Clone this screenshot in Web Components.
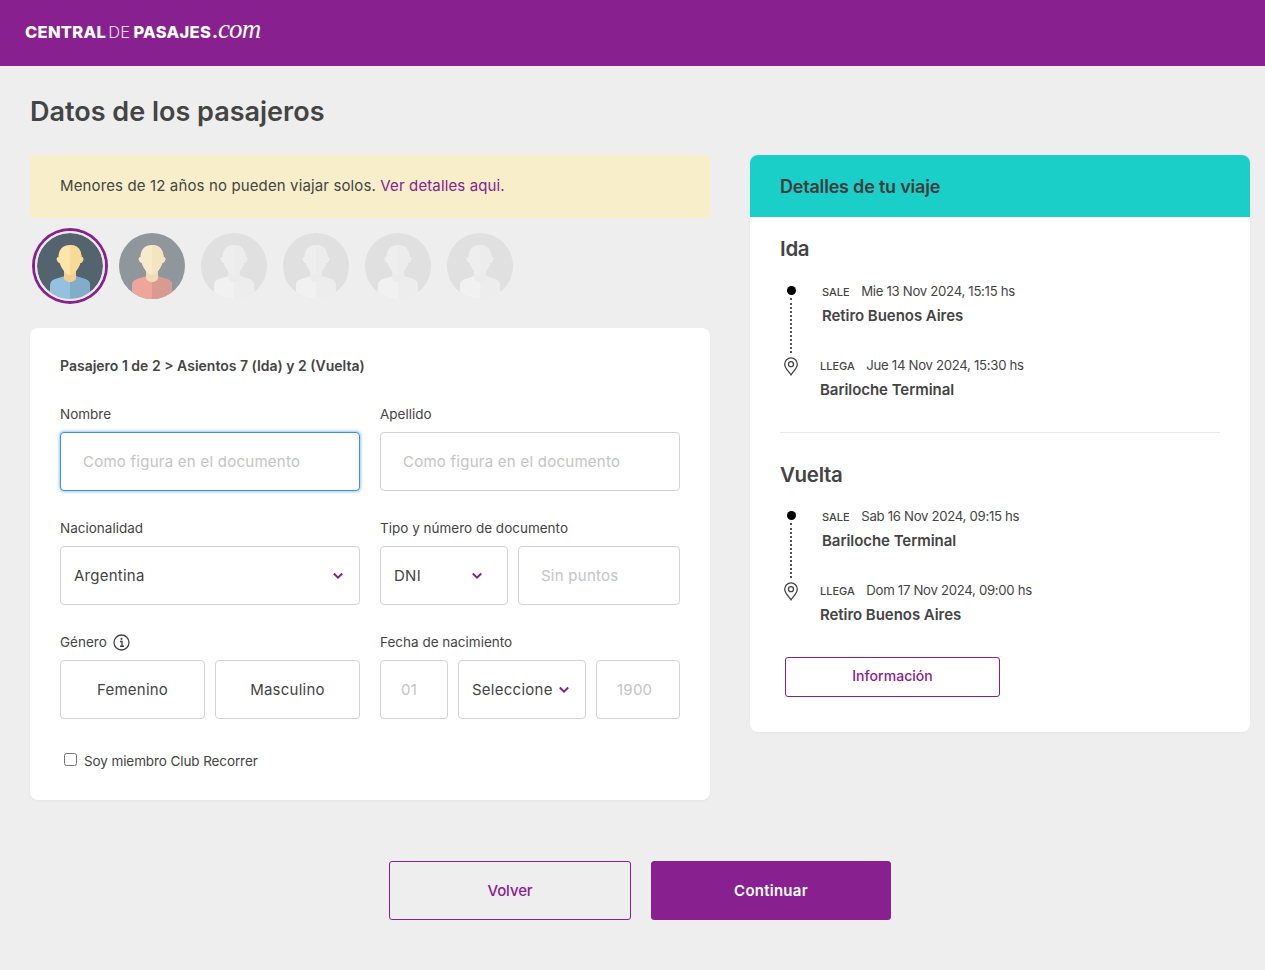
<!DOCTYPE html>
<html lang="es">
<head>
<meta charset="utf-8">
<title>Datos de los pasajeros</title>
<style>
  body { margin: 0; background: #eeeeee; color: #444; font-family: Inter, "Noto Sans", sans-serif; }
</style>
</head>
<body>
<cp-header></cp-header>
<cp-page>
  <span slot="title">Datos de los pasajeros</span>
  <cp-alert slot="left">Menores de 12 años no pueden viajar solos. <a>Ver detalles aqui.</a></cp-alert>
  <cp-avatars slot="left"></cp-avatars>
  <cp-form slot="left"></cp-form>
  <cp-trip slot="right"></cp-trip>
  <cp-actions slot="footer"></cp-actions>
</cp-page>

<script>
const PURPLE = '#88218f';

class CpHeader extends HTMLElement {
    constructor() {
        super();
        this.attachShadow({ mode: 'open' });
        this.shadowRoot.innerHTML = `
        <style>
            :host { display: flex; align-items: center; height: 66px; background: ${PURPLE}; padding: 0 0 7px 25px; box-sizing: border-box; }
            .logo { color: #fff; font: 800 16.500px/1 Inter, sans-serif; letter-spacing: .3px; white-space: nowrap; display: flex; align-items: baseline; }
            .de { font-weight: 300; color: #eedcf0; margin: 0 3px 0 2px; }
            .com { font: italic 400 27px/1 "Liberation Serif", serif; letter-spacing: -.9px; margin-left: 1px; }
        </style>
        <div class="logo">CENTRAL<span class="de">DE</span>PASAJES<span class="com">.com</span></div>`;
    }
}

class CpPage extends HTMLElement {
    constructor() {
        super();
        this.attachShadow({ mode: 'open' });
        this.shadowRoot.innerHTML = `
        <style>
            :host { display: block; padding: 0 15px 50px 30px; }
            h1 { margin: 0; padding-top: 28px; height: 89px; box-sizing: border-box; font: 600 27px/36px Inter, sans-serif; letter-spacing: 0; color: #444; }
            .cols { display: flex; gap: 40px; align-items: flex-start; }
            .left { width: 680px; flex: none; }
            .right { width: 500px; flex: none; }
            .footer { margin-top: 61px; }
        </style>
        <h1><slot name="title"></slot></h1>
        <div class="cols">
            <div class="left"><slot name="left"></slot></div>
            <div class="right"><slot name="right"></slot></div>
        </div>
        <div class="footer"><slot name="footer"></slot></div>`;
    }
}

class CpAlert extends HTMLElement {
    constructor() {
        super();
        this.attachShadow({ mode: 'open' });
        this.shadowRoot.innerHTML = `
        <style>
            :host { display: block; height: 63px; box-sizing: border-box; padding: 0 30px; line-height: 61px; background: #f8efca; border-radius: 4px; font-size: 15px; letter-spacing: .13px; color: #444; }
            ::slotted(a) { color: ${PURPLE}; }
        </style>
        <slot></slot>`;
    }
}

class CpAvatar extends HTMLElement {
    constructor() {
        super();
        this.attachShadow({ mode: 'open' });
    }
    connectedCallback() {
        const kind = this.getAttribute('kind') || 'off';
        // bg, skin, skin shade, neck, shirt, shirt shade
        const colors = {
            man: ['#54646e', '#fde4a9', '#f9d996', '#f2cf8e', '#94c1de', '#82adc8'],
            woman: ['#8f979d', '#f8ebcd', '#f4e4c0', '#eedcb2', '#eea59c', '#d99a91'],
            off: ['#e0e0e0', '#eeeeee', '#ececec', '#ebebeb', '#f1f1f1', '#ededed']
        }[kind];
        const ring = this.hasAttribute('selected') ? '<div class="ring"></div>' : '';
        this.shadowRoot.innerHTML = `
        <style>
            :host { display: block; position: relative; width: 66px; height: 66px; }
            svg { display: block; }
            .ring { position: absolute; inset: -2px; border-radius: 50%; box-shadow: 0 0 0 3px ${PURPLE}; background: none; border: 2px solid #e9e9e9; box-sizing: border-box; }
        </style>
        <svg width="66" height="66" viewBox="0 0 66 66">
            <defs><clipPath id="c"><circle cx="33" cy="33" r="33"/></clipPath></defs>
            <g clip-path="url(#c)">
                <rect width="66" height="66" fill="${colors[0]}"/>
                <path d="M13 66V52c0-3 2-5 5-6l10-3h10l10 3c3 1 5 3 5 6v14z" fill="${colors[4]}"/>
                <path d="M33 43h5l10 3c3 1 5 3 5 6v14H33z" fill="${colors[5]}"/>
                <path d="M27 36h12v9c0 2-3 4-6 4s-6-2-6-4z" fill="${colors[3]}"/>
                <path d="M33 12c-7.500 0-11.500 5-11.500 12-1.500 0-2.200 1.500-1.700 3 .4 1.500 1.600 3 2.900 3 1 4.500 6.500 12 10.300 12s9.300-7.500 10.300-12c1.300 0 2.500-1.500 2.900-3 .5-1.500-.2-3-1.700-3 0-7-4-12-11.500-12z" fill="${colors[1]}"/>
                <path d="M33 12c7.500 0 11.500 5 11.500 12 1.500 0 2.200 1.500 1.700 3-.4 1.500-1.600 3-2.900 3-1 4.500-6.500 12-10.300 12z" fill="${colors[2]}"/>
            </g>
        </svg>${ring}`;
    }
}

class CpAvatars extends HTMLElement {
    constructor() {
        super();
        this.attachShadow({ mode: 'open' });
        this.shadowRoot.innerHTML = `
        <style>
            :host { display: flex; gap: 16px; padding: 15px 0 29px 7px; }
        </style>
        <cp-avatar kind="man" selected></cp-avatar>
        <cp-avatar kind="woman"></cp-avatar>
        <cp-avatar></cp-avatar>
        <cp-avatar></cp-avatar>
        <cp-avatar></cp-avatar>
        <cp-avatar></cp-avatar>`;
    }
}

// campo de formulario: input, select o boton, todos con la misma caja
class CpField extends HTMLElement {
    constructor() {
        super();
        this.attachShadow({ mode: 'open' });
    }
    connectedCallback() {
        const chevron = this.hasAttribute('select')
            ? `<svg width="12" height="8" viewBox="0 0 12 8"><path d="M1.800 1.500 6 5.700l4.200-4.200" fill="none" stroke="${PURPLE}" stroke-width="2"/></svg>`
            : '';
        this.shadowRoot.innerHTML = `
        <style>
            :host { display: flex; align-items: center; justify-content: space-between; box-sizing: border-box; height: 59px; background: #fff; border: 1px solid #d3d3d3; border-radius: 4px; padding: 0 15px 0 13px; font-size: 15px; letter-spacing: .25px; color: #444; white-space: nowrap; }
            :host([placeholder]) { color: #c4c4c4; padding-left: 22px; }
            :host([focus]) { border-color: #3e8df0; box-shadow: 0 0 3px 1px #9cc6f7; }
            :host([center]) { justify-content: center; padding: 0; }
            svg { flex: none; }
        </style>
        <slot></slot>${chevron}`;
    }
}

class CpForm extends HTMLElement {
    constructor() {
        super();
        this.attachShadow({ mode: 'open' });
        this.shadowRoot.innerHTML = `
        <style>
            :host { display: block; box-sizing: border-box; height: 472px; background: #fff; border-radius: 8px; padding: 28px 30px 0; box-shadow: 0 1px 3px rgba(0,0,0,.04); }
            .title { height: 20px; font-weight: 600; font-size: 14px; line-height: 20px; letter-spacing: 0; color: #444; }
            .grid { display: grid; grid-template-columns: 300px 300px; gap: 28px 20px; margin-top: 29px; }
            label { display: flex; align-items: center; gap: 6px; height: 18px; margin-bottom: 9px; font-size: 13.500px; letter-spacing: 0; color: #444; }
            .split { display: flex; gap: 10px; }
            .grow { flex: 1; }
            .w128 { width: 128px; flex: none; }
            .w162 { width: 162px; flex: none; }
            .w68 { width: 68px; flex: none; }
            .w84 { width: 84px; flex: none; }
            .w68, .w84 { padding-left: 20px; }
            .club { display: flex; align-items: center; gap: 7px; margin-top: 32px; padding-left: 4px; height: 20px; font-size: 13.500px; letter-spacing: -.1px; color: #444; }
            .box { width: 11px; height: 11px; background: #fff; border: 1px solid #767676; border-radius: 2.500px; margin-top: -3px; }
        </style>
        <div class="title">Pasajero 1 de 2 &gt; Asientos 7 (Ida) y 2 (Vuelta)</div>
        <div class="grid">
            <div>
                <label>Nombre</label>
                <cp-field placeholder focus>Como figura en el documento</cp-field>
            </div>
            <div>
                <label>Apellido</label>
                <cp-field placeholder>Como figura en el documento</cp-field>
            </div>
            <div>
                <label>Nacionalidad</label>
                <cp-field select>Argentina</cp-field>
            </div>
            <div>
                <label>Tipo y número de documento</label>
                <div class="split">
                    <cp-field select class="w128" style="padding-right:24px">DNI</cp-field>
                    <cp-field placeholder class="w162">Sin puntos</cp-field>
                </div>
            </div>
            <div>
                <label>Género
                    <svg width="17" height="17" viewBox="0 0 17 17"><circle cx="8.500" cy="8.500" r="7.500" fill="none" stroke="#444" stroke-width="1.300"/><path d="M7 7.500h2v4.500M7 12.300h4" fill="none" stroke="#444" stroke-width="1.400"/><circle cx="8.500" cy="4.800" r="1.100" fill="#444"/></svg>
                </label>
                <div class="split">
                    <cp-field center class="grow">Femenino</cp-field>
                    <cp-field center class="grow">Masculino</cp-field>
                </div>
            </div>
            <div>
                <label>Fecha de nacimiento</label>
                <div class="split">
                    <cp-field placeholder class="w68">01</cp-field>
                    <cp-field select class="w128">Seleccione</cp-field>
                    <cp-field placeholder class="w84">1900</cp-field>
                </div>
            </div>
        </div>
        <div class="club"><span class="box"></span>Soy miembro Club Recorrer</div>`;
    }
}

class CpStop extends HTMLElement {
    constructor() {
        super();
        this.attachShadow({ mode: 'open' });
    }
    connectedCallback() {
        const arrive = this.hasAttribute('arrive');
        const mark = arrive
            ? `<svg class="pin" width="16" height="19" viewBox="0 0 16 19"><path d="M8 17.800C5 13.800 1.700 10.800 1.700 7.200a6.300 6.300 0 0 1 12.600 0c0 3.600-3.300 6.600-6.300 10.600z" fill="none" stroke="#444" stroke-width="1.300"/><circle cx="8" cy="7.200" r="2.500" fill="none" stroke="#444" stroke-width="1.300"/></svg>`
            : `<span class="dot"></span><span class="line"></span>`;
        this.shadowRoot.innerHTML = `
        <style>
            :host { display: grid; grid-template-columns: 42px auto; height: 74px; }
            :host([arrive]) { grid-template-columns: 40px auto; height: 50px; }
            .mark { position: relative; display: flex; flex-direction: column; align-items: center; width: 22px; }
            .dot { width: 9px; height: 9px; border-radius: 50%; background: #000; margin-top: 5px; flex: none; }
            .line { width: 0; height: 55px; border-left: 2px dotted #555; margin-top: 3px; }
            .pin { margin-top: 2px; margin-left: -1px; }
            .top { display: flex; align-items: baseline; height: 20px; line-height: 20px; font-size: 13.200px; letter-spacing: -.3px; color: #444; }
            .tag { font-size: 11px; letter-spacing: 0; font-weight: 500; margin-right: 11.500px; }
            .name { margin-top: 5px; font-weight: 600; font-size: 15px; line-height: 20px; letter-spacing: -.05px; color: #444; }
        </style>
        <div class="mark">${mark}</div>
        <div>
            <div class="top"><span class="tag">${arrive ? 'LLEGA' : 'SALE'}</span><slot name="when"></slot></div>
            <div class="name"><slot name="where"></slot></div>
        </div>`;
    }
}

class CpTrip extends HTMLElement {
    constructor() {
        super();
        this.attachShadow({ mode: 'open' });
        this.shadowRoot.innerHTML = `
        <style>
            :host { display: block; box-sizing: border-box; height: 577px; background: #fff; border-radius: 8px; overflow: hidden; box-shadow: 0 1px 3px rgba(0,0,0,.04); }
            header { height: 62px; background: #1bcfc9; padding-left: 30px; font-weight: 600; font-size: 18px; line-height: 63px; letter-spacing: -.2px; color: #3d3d3d; }
            .leg { margin: 0 30px; }
            h2 { margin: 0; font-weight: 600; font-size: 20.500px; line-height: 28px; letter-spacing: -.3px; color: #444; }
            .ida { padding-top: 18px; height: 216px; box-sizing: border-box; border-bottom: 1px solid #e9e9e9; }
            .vuelta { padding-top: 28px; }
            .stops { margin-top: 18px; }
            .vuelta .stops { margin-top: 17px; }
            button { display: block; width: 215px; height: 40px; margin: 27px 0 0 5px; padding-bottom: 4px; background: #fff; border: 1px solid ${PURPLE}; border-radius: 3px; color: ${PURPLE}; font: 500 14px Inter, sans-serif; letter-spacing: .05px; }
        </style>
        <header>Detalles de tu viaje</header>
        <div class="leg ida">
            <h2>Ida</h2>
            <div class="stops">
                <cp-stop><span slot="when">Mie 13 Nov 2024, 15:15 hs</span><span slot="where">Retiro Buenos Aires</span></cp-stop>
                <cp-stop arrive><span slot="when">Jue 14 Nov 2024, 15:30 hs</span><span slot="where">Bariloche Terminal</span></cp-stop>
            </div>
        </div>
        <div class="leg vuelta">
            <h2>Vuelta</h2>
            <div class="stops">
                <cp-stop><span slot="when">Sab 16 Nov 2024, 09:15 hs</span><span slot="where">Bariloche Terminal</span></cp-stop>
                <cp-stop arrive><span slot="when">Dom 17 Nov 2024, 09:00 hs</span><span slot="where">Retiro Buenos Aires</span></cp-stop>
            </div>
            <button>Información</button>
        </div>`;
    }
}

class CpActions extends HTMLElement {
    constructor() {
        super();
        this.attachShadow({ mode: 'open' });
        this.shadowRoot.innerHTML = `
        <style>
            :host { display: flex; justify-content: center; gap: 20px; }
            button { height: 59px; border-radius: 3px; font: 600 15px Inter, sans-serif; letter-spacing: .25px; border: 1px solid ${PURPLE}; }
            .back { width: 242px; background: transparent; color: ${PURPLE}; font-weight: 500; letter-spacing: -.1px; }
            .next { width: 240px; background: ${PURPLE}; color: #fff; }
        </style>
        <button class="back">Volver</button>
        <button class="next">Continuar</button>`;
    }
}

customElements.define('cp-header', CpHeader);
customElements.define('cp-page', CpPage);
customElements.define('cp-alert', CpAlert);
customElements.define('cp-avatar', CpAvatar);
customElements.define('cp-avatars', CpAvatars);
customElements.define('cp-field', CpField);
customElements.define('cp-form', CpForm);
customElements.define('cp-stop', CpStop);
customElements.define('cp-trip', CpTrip);
customElements.define('cp-actions', CpActions);
</script>
</body>
</html>
